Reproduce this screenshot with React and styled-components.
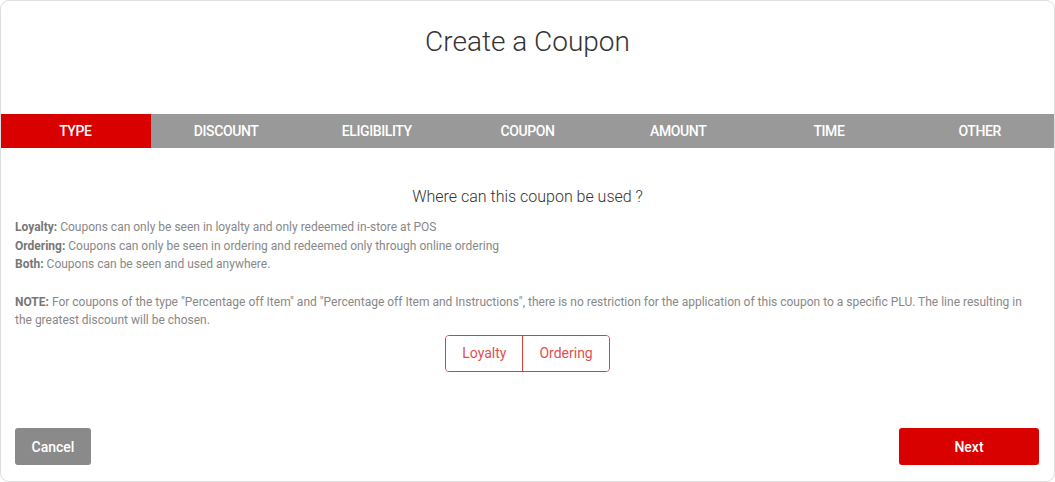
import React, { useState } from "react";
import styled, { createGlobalStyle } from "styled-components";

const Global = createGlobalStyle`
  html, body { margin: 0; padding: 0; background: #ffffff; }
  body { font-family: Roboto, "Liberation Sans", Arial, sans-serif; }
  * { box-sizing: border-box; }
`;

const Card = styled.div`
  width: 1055px;
  height: 482px;
  border: 1px solid #dedede;
  border-radius: 9px;
  background: #fff;
  display: flex;
  flex-direction: column;
  overflow: hidden;
`;

const Header = styled.div`
  height: 113px;
  display: flex;
  justify-content: center;
  padding-top: 23px;
`;

const Title = styled.h1`
  margin: 0;
  font-family: Roboto, sans-serif;
  font-weight: 300;
  font-size: 28px;
  line-height: 36px;
  color: #333;
`;

const Tabs = styled.div`
  display: grid;
  grid-template-columns: repeat(7, 1fr);
  height: 34px;
  margin: 0 -1px;
  background: #999999;
`;

const Tab = styled.div`
  display: flex;
  align-items: center;
  justify-content: center;
  background: ${(p) => (p.$active ? "#d90000" : "#999999")};
  color: #fff;
  font-family: Roboto, sans-serif;
  font-weight: 500;
  font-size: 14px;
  letter-spacing: -0.4px;
`;

const Body = styled.div`
  flex: 1;
  padding: 39px 14px 0 14px;
  display: flex;
  flex-direction: column;
`;

const Question = styled.div`
  text-align: center;
  font-weight: 300;
  font-size: 16px;
  line-height: 20px;
  color: #333;
  margin-bottom: 11px;
`;

const Info = styled.p`
  margin: 0 0 ${(p) => p.$gap}px 0;
  font-size: 12px;
  line-height: 18.5px;
  color: #888;
`;

const Label = styled.b`
  font-weight: 700;
  color: #777;
`;

const Segmented = styled.div`
  align-self: center;
  display: flex;
  border: 1px solid #e53935;
  border-radius: 4px;
  overflow: hidden;
`;

const Segment = styled.button`
  height: 35px;
  padding: 0 16px;
  border: none;
  border-left: ${(p) => (p.$first ? "none" : "1px solid #e53935")};
  background: ${(p) => (p.$active ? "#e53935" : "#fff")};
  color: ${(p) => (p.$active ? "#fff" : "#e05050")};
  font-family: Roboto, sans-serif;
  font-size: 14px;
  cursor: pointer;
`;

const Footer = styled.div`
  display: flex;
  justify-content: space-between;
  padding: 0 15px 16px 14px;
`;

const FooterButton = styled.button`
  height: 37px;
  width: ${(p) => p.$w}px;
  border: none;
  border-radius: 3px;
  background: ${(p) => p.$bg};
  color: #fff;
  font-family: Roboto, sans-serif;
  font-weight: 500;
  font-size: 14px;
  cursor: pointer;
`;

const tabs = ["TYPE", "DISCOUNT", "ELIGIBILITY", "COUPON", "AMOUNT", "TIME", "OTHER"];

export default function App() {
  const [sel, setSel] = useState(null);
  return (
    <>
      <Global />
      <Card>
        <Header>
          <Title>Create a Coupon</Title>
        </Header>
        <Tabs>
          {tabs.map((t, i) => (
            <Tab key={t} $active={i === 0}>{t}</Tab>
          ))}
        </Tabs>
        <Body>
          <Question>Where can this coupon be used ?</Question>
          <Info $gap={19}>
            <Label>Loyalty:</Label> Coupons can only be seen in loyalty and only redeemed in-store at POS
            <br />
            <Label>Ordering:</Label> Coupons can only be seen in ordering and redeemed only through online ordering
            <br />
            <Label>Both:</Label> Coupons can be seen and used anywhere.
          </Info>
          <Info $gap={5}>
            <Label>NOTE:</Label> For coupons of the type "Percentage off Item" and "Percentage off Item and Instructions", there is no restriction for the application of this coupon to a specific PLU. The line resulting in the greatest discount will be chosen.
          </Info>
          <Segmented>
            <Segment $first $active={sel === 0} onClick={() => setSel(0)}>Loyalty</Segment>
            <Segment $active={sel === 1} onClick={() => setSel(1)}>Ordering</Segment>
          </Segmented>
        </Body>
        <Footer>
          <FooterButton $w={76} $bg="#8a8a8a">Cancel</FooterButton>
          <FooterButton $w={140} $bg="#d90000">Next</FooterButton>
        </Footer>
      </Card>
    </>
  );
}
